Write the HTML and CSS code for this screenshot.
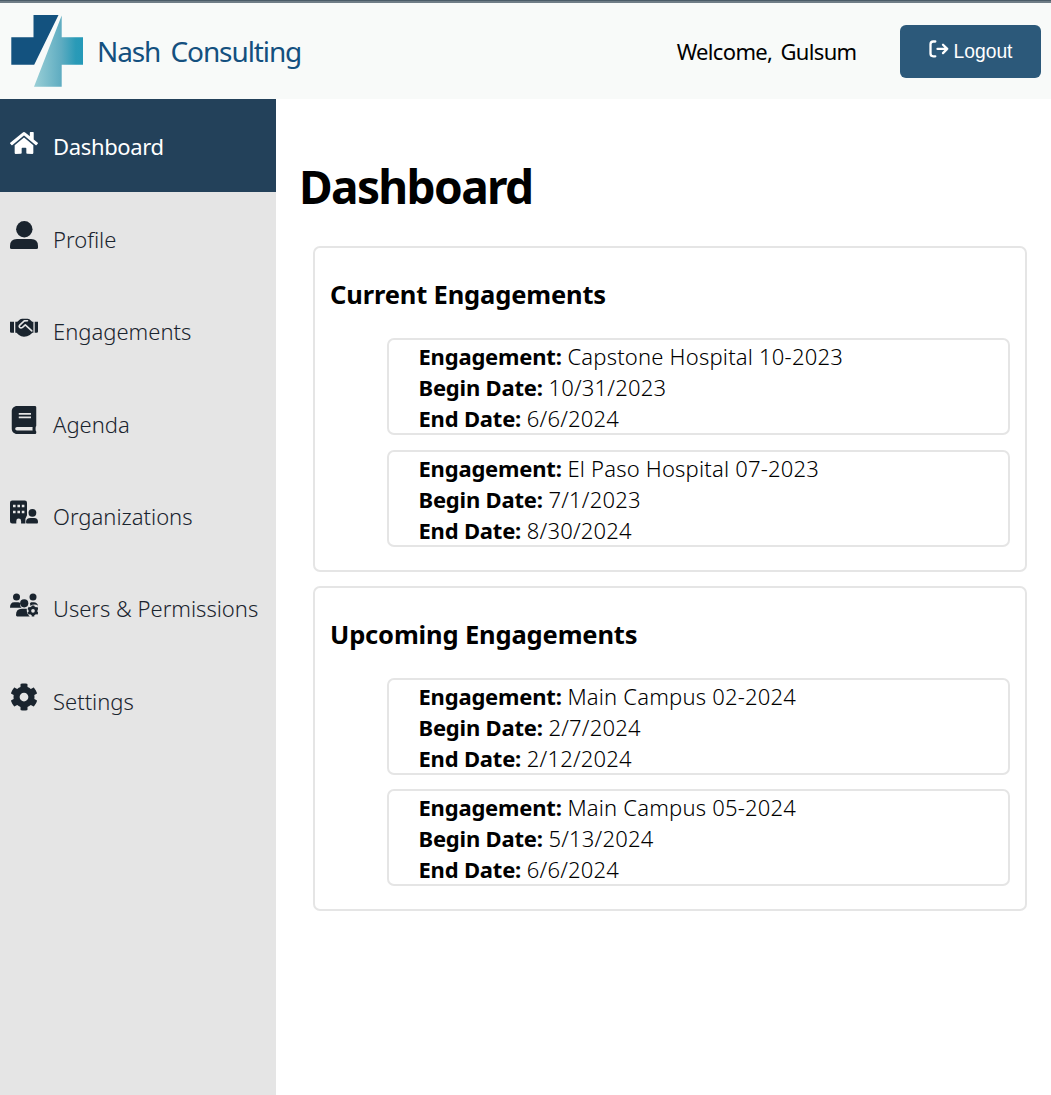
FILE: index.html
```html
<!DOCTYPE html>
<html lang="en">
<head>
<meta charset="utf-8">
<title>Nash Consulting</title>
<link rel="stylesheet" href="styles.css">
</head>
<body>
<header class="topbar">
  <div class="brand">
    <svg class="logo" width="74" height="74" viewBox="10 14 74 74">
      <defs><linearGradient id="teal" gradientUnits="userSpaceOnUse" x1="34" y1="0" x2="83" y2="0"><stop offset="0" stop-color="#9acfd6"/><stop offset=".56" stop-color="#5eacc1"/><stop offset=".85" stop-color="#2a9ab7"/><stop offset="1" stop-color="#2499b8"/></linearGradient></defs>
      <path fill="#13527f" d="M33.5 15h25L34.2 64.8H11.3V37.2h22.2z"/>
      <path fill="url(#teal)" d="M61.7 15.5V37.2H83v27.6H61.7v22H34z"/>
    </svg>
    <span class="brand-name">Nash Consulting</span>
  </div>
  <div class="account">
    <span class="welcome">Welcome, Gulsum</span>
    <button class="logout">
      <svg width="20" height="18" viewBox="0 0 20 18" fill="none" stroke="#fff" stroke-width="2.3" stroke-linecap="round" stroke-linejoin="round"><path d="M6.300 1.500H4.200Q1.500 1.500 1.500 4.200v9.400q0 2.700 2.700 2.700h2.100M8.500 8.900h9.700M14 4.700l4.200 4.200-4.200 4.200"/></svg>
      <span>Logout</span>
    </button>
  </div>
</header>
<div class="layout">
  <nav class="sidebar">
    <a class="item active"><svg class="icon" viewBox="0 0 576 512"><path d="M280.37 148.26L96 300.11V464a16 16 0 0 0 16 16l112.06-.29a16 16 0 0 0 15.92-16V368a16 16 0 0 1 16-16h64a16 16 0 0 1 16 16v95.64a16 16 0 0 0 16 16.05L464 480a16 16 0 0 0 16-16V300L295.67 148.26a12.19 12.19 0 0 0-15.3 0zM571.6 251.47L488 182.56V44.05a12 12 0 0 0-12-12h-56a12 12 0 0 0-12 12v72.61L318.47 43a48 48 0 0 0-61 0L4.34 251.47a12 12 0 0 0-1.6 16.9l25.5 31A12 12 0 0 0 45.15 301l235.22-193.74a12.19 12.19 0 0 1 15.3 0L530.9 301a12 12 0 0 0 16.9-1.6l25.5-31a12 12 0 0 0-1.7-16.93z"/></svg><span>Dashboard</span></a>
    <a class="item"><svg class="icon" viewBox="0 0 28 28"><circle cx="14.3" cy="8.2" r="8.2"/><path d="M7 18h14q7 0 7 7v1.500q0 1.500-1.500 1.500h-25Q0 28 0 26.500V25q0-7 7-7z"/></svg><span>Profile</span></a>
    <a class="item"><svg class="icon" viewBox="0 -4.500 28 28"><path d="M0 3.300h4v11H1.300Q0 14.300 0 13zM24.700 3.300H28V13q0 1.300-1.300 1.300h-2zM5.300 3.300h2L10.200.8Q11 .2 12 .2h5.600q1 0 1.800.6l2.800 2.500h1.200v11h-1l-2.600 2.200q-2.500 1.700-5.800 1.700-3 0-5-1.700l-2.500-2.200H5.300z"/><path class="cut" d="M17.500 2.200l-3.200.2-4.300 4q-1.400 1.400-.3 2.500 1.200 1.100 2.800-.1l2.800-2.400 6.500 6"/></svg><span>Engagements</span></a>
    <a class="item"><svg class="icon" viewBox="0 0 448 512"><path d="M448 360V24c0-13.300-10.700-24-24-24H96C43 0 0 43 0 96v320c0 53 43 96 96 96h328c13.300 0 24-10.700 24-24v-16c0-7.500-3.500-14.300-8.900-18.700-4.200-15.400-4.200-59.300 0-74.700 5.400-4.300 8.900-11.100 8.900-18.600zM128 134c0-3.300 2.700-6 6-6h212c3.300 0 6 2.700 6 6v20c0 3.300-2.700 6-6 6H134c-3.300 0-6-2.700-6-6v-20zm0 64c0-3.300 2.700-6 6-6h212c3.300 0 6 2.700 6 6v20c0 3.300-2.700 6-6 6H134c-3.300 0-6-2.700-6-6v-20zm253.400 250H96c-17.700 0-32-14.300-32-32 0-17.600 14.400-32 32-32h285.400c-1.900 17.100-1.900 46.900 0 64z"/></svg><span>Agenda</span></a>
    <a class="item"><svg class="icon" viewBox="0 -2.500 28 28"><path fill-rule="evenodd" d="M2.200 0h12.600Q17 0 17 2.200v12.500l-1.600 3.500V23h-4.300v-2.600Q11.100 18 8.700 18t-2.400 2.400V23H2.200Q0 23 0 20.800V2.200Q0 0 2.200 0zM3 4.200v2.600h2.600V4.200zm4.400 0v2.600H10V4.200zm4.400 0v2.600h2.600V4.200zM3 10.200v2.600h2.600v-2.600zm4.400 0v2.600H10v-2.600zm4.400 0v2.600h2.600v-2.600z"/><circle cx="22.400" cy="12.300" r="3.900"/><path d="M20.500 17.500h3.700q3.800 0 3.800 4 0 1.500-1 1.500H17q-1 0-1-1.500 0-4 4.500-4z"/></svg><span>Organizations</span></a>
    <a class="item"><svg class="icon" viewBox="0 -2.500 28 28"><circle cx="6.500" cy="3.500" r="3.500"/><circle cx="23" cy="3.500" r="3.500"/><path d="M4.200 8.700h4q1 0 1.800.5-.5 3 1.500 5H0q0-5.500 4.200-5.500zM21 8.700h2.800q3.500 0 4.200 3.500-1.300-1.200-3.300-1.200-2.500 0-4.500 1.200.1-1.500-.2-2.500z"/><circle cx="14.200" cy="9.800" r="4.100"/><path d="M11.800 15.300h5q-.5 4.800 3 7.700H7.200Q6 23 6 21.600q0-6.300 5.800-6.300z"/><circle cx="23" cy="17.300" r="3.200" fill="none" stroke="currentColor" stroke-width="2.700"/><path d="M23 12v2.600M23 20v3M18.100 14.500l2.500 1.400M25.400 18.800l2.500 1.400M27.900 14.500l-2.500 1.400M20.600 18.800l-2.500 1.400" stroke="currentColor" stroke-width="2.600"/></svg><span>Users &amp; Permissions</span></a>
    <a class="item"><svg class="icon" viewBox="0 0 512 512"><path d="M487.400 315.700l-42.600-24.600c4.300-23.200 4.300-47 0-70.200l42.600-24.600c4.900-2.800 7.100-8.600 5.500-14-11.100-35.600-30-67.800-54.700-94.600-3.800-4.100-10-5.100-14.800-2.300L380.800 110c-17.900-15.400-38.500-27.300-60.800-35.100V25.800c0-5.600-3.900-10.500-9.400-11.700-36.700-8.200-74.300-7.800-109.200 0-5.500 1.200-9.400 6.100-9.400 11.700V75c-22.200 7.900-42.800 19.800-60.800 35.100L88.700 85.500c-4.900-2.800-11-1.900-14.800 2.300-24.700 26.700-43.600 58.900-54.700 94.600-1.700 5.400.6 11.200 5.500 14L67.300 221c-4.300 23.200-4.300 47 0 70.200l-42.600 24.600c-4.900 2.800-7.100 8.600-5.500 14 11.100 35.600 30 67.800 54.700 94.600 3.800 4.100 10 5.100 14.800 2.300l42.600-24.600c17.900 15.400 38.500 27.300 60.800 35.100v49.200c0 5.600 3.900 10.500 9.400 11.700 36.700 8.200 74.300 7.800 109.200 0 5.500-1.200 9.400-6.100 9.400-11.700v-49.200c22.200-7.900 42.800-19.800 60.800-35.100l42.600 24.600c4.900 2.800 11 1.900 14.800-2.300 24.700-26.700 43.600-58.900 54.700-94.600 1.500-5.500-.7-11.300-5.600-14.100zM256 336c-44.100 0-80-35.900-80-80s35.900-80 80-80 80 35.900 80 80-35.900 80-80 80z"/></svg><span>Settings</span></a>
  </nav>
  <main class="content">
    <h1>Dashboard</h1>
    <section class="panel">
      <h2>Current Engagements</h2>
      <div class="entry">
        <div><b>Engagement:</b> <span>Capstone Hospital 10-2023</span></div>
        <div><b>Begin Date:</b> <span>10/31/2023</span></div>
        <div><b>End Date:</b> <span>6/6/2024</span></div>
      </div>
      <div class="entry">
        <div><b>Engagement:</b> <span>El Paso Hospital 07-2023</span></div>
        <div><b>Begin Date:</b> <span>7/1/2023</span></div>
        <div><b>End Date:</b> <span>8/30/2024</span></div>
      </div>
    </section>
    <section class="panel">
      <h2>Upcoming Engagements</h2>
      <div class="entry">
        <div><b>Engagement:</b> <span>Main Campus 02-2024</span></div>
        <div><b>Begin Date:</b> <span>2/7/2024</span></div>
        <div><b>End Date:</b> <span>2/12/2024</span></div>
      </div>
      <div class="entry">
        <div><b>Engagement:</b> <span>Main Campus 05-2024</span></div>
        <div><b>Begin Date:</b> <span>5/13/2024</span></div>
        <div><b>End Date:</b> <span>6/6/2024</span></div>
      </div>
    </section>
  </main>
</div>
</body>
</html>
```
FILE: styles.css
```css
* { box-sizing: border-box; }
body {
  margin: 0;
  height: 1095px;
  display: flex;
  flex-direction: column;
  overflow: hidden;
  background: #fff;
  color: #000;
  font-family: "Noto Sans", "Open Sans", sans-serif;
  font-size: 22px;
}
.topbar {
  height: 99px;
  flex: none;
  display: flex;
  justify-content: space-between;
  align-items: center;
  padding: 3px 10px 0;
  background: linear-gradient(#4b5c68 0 1px, #6f7d87 1px 3px, #f8faf9 3px);
}
.brand, .account { display: flex; align-items: center; }
.brand { gap: 13px; }
.logo { display: block; }
.brand-name { font-size: 28px; letter-spacing: -1.1px; word-spacing: 4px; color: #14507f; }
.account { gap: 43.5px; }
.welcome { letter-spacing: -0.65px; word-spacing: 3px; }
.logout {
  width: 141px;
  height: 53px;
  display: flex;
  align-items: center;
  justify-content: center;
  gap: 5px;
  border: 0;
  border-radius: 6px;
  background: #2c597a;
  color: #fff;
  font: 19.3px "Liberation Sans", Arial, sans-serif;
}
.logout svg { margin-bottom: 5px; }
.logout span { padding-top: 1px; }
.layout { display: flex; flex: 1; }
.sidebar { width: 276px; flex: none; background: #e5e5e5; color: #1a242e; }
.item {
  display: flex;
  align-items: center;
  height: 92.4px;
  padding: 0 10px;
  gap: 15px;
  font-weight: 350;
  white-space: nowrap;
}
.item span { padding-top: 2px; }
.active { height: 92.6px; background: #23415a; color: #fff; font-weight: 400; letter-spacing: -0.35px; }
.icon { width: 28px; height: 28px; flex: none; margin-bottom: 5px; fill: currentColor; }
.cut { fill: none; stroke: #e5e5e5; stroke-width: 1.6; stroke-linecap: round; stroke-linejoin: round; }
.content { flex: 1; padding: 55px 24px 0; }
h1 { margin: 0 0 28.2px -1px; font-size: 46px; line-height: 64px; letter-spacing: -1.65px; }
.panel {
  height: 325.6px;
  margin: 0 0 14px 13px;
  padding: 28px 15px 0;
  border: 2px solid #e5e5e5;
  border-radius: 7px;
}
h2 { margin: 0 0 26px; font-size: 25.5px; line-height: 36px; letter-spacing: -0.15px; }
.entry {
  height: 97px;
  margin: 0 0 14.5px 57px;
  padding: 1px 29.5px 0;
  border: 2px solid #e5e5e5;
  border-radius: 7px;
  line-height: 31px;
}
.entry b { letter-spacing: -0.2px; }
.entry span { font-weight: 350; letter-spacing: 0.2px; }
```
